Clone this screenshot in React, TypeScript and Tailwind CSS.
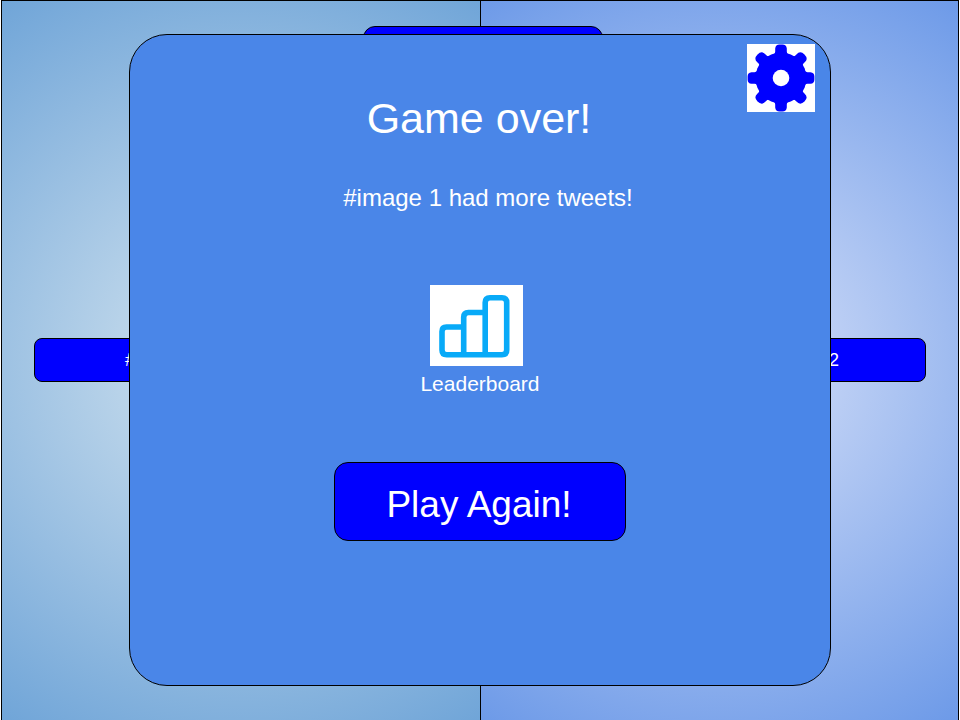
function GearIcon() {
  return (
    <svg viewBox="0 0 68 68" className="size-[68px] bg-white" aria-hidden="true">
      <g fill="#0000ff">
        <circle cx="34" cy="34" r="25.5" />
        {[0, 90, 180, 270].map((angle) => (
          <path
            key={angle}
            transform={`rotate(${angle} 34 34)`}
            d="M24 12 Q28 10.500 28.200 7.500 V4.500 Q28.600 .600 32.500 .600 H35.500 Q39.400 .600 39.800 4.500 V7.500 Q40 10.500 44 12 Z"
          />
        ))}
        {[45, 135, 225, 315].map((angle) => (
          <path
            key={angle}
            transform={`rotate(${angle} 34 34)`}
            d="M25 12 Q29 10 28.300 6.500 Q27.900 .800 34 .800 Q40.100 .800 39.700 6.500 Q39 10 43 12 Z"
          />
        ))}
      </g>
      <circle cx="34" cy="34" r="8.300" fill="#ffffff" />
    </svg>
  );
}

function BarsIcon() {
  return (
    <svg viewBox="0 0 93 81" className="h-[81px] w-[93px] bg-white" aria-hidden="true">
      <g fill="none" stroke="#08aaf8" strokeWidth="5.600" strokeLinejoin="round">
        <path d="M33.700 42 H16.500 Q12 42 12 46.500 V65 Q12 69.700 16.700 69.700 H72 Q76.700 69.700 76.700 65 V17.500 Q76.700 12.700 72 12.700 H60 Q55.200 12.700 55.200 17.500 V69.700" />
        <path d="M55.200 27.500 H38.500 Q33.700 27.500 33.700 32.200 V69.700" />
      </g>
    </svg>
  );
}

const choiceStyle =
  "h-11 rounded-lg border border-black bg-[#0000ff] text-lg leading-6 text-white";

export default function App() {
  return (
    <main className="grid min-h-screen bg-white px-px font-['Liberation_Sans',Arial,sans-serif]">
      <div className="relative col-start-1 row-start-1 grid grid-cols-2 border-t border-black">
        <section className="flex items-center border-l border-black bg-[radial-gradient(circle_at_center,#d5e5f0,#70a5d8)] pb-0.5 pl-8">
          <button type="button" className={`${choiceStyle} w-64`}>
            #image 1
          </button>
        </section>
        <section className="flex items-center justify-end border-x border-black bg-[radial-gradient(circle_at_center,#d9e2f9,#6d9ae8)] pr-8 pb-0.5">
          <button type="button" className={`${choiceStyle} w-62`}>
            #image 2
          </button>
        </section>
        <div className="absolute inset-x-0 top-[25px] flex justify-center pl-1.5">
          <div className="h-20 w-60 rounded-xl border border-black bg-[#0000ff]" />
        </div>
      </div>

      <div className="z-10 col-start-1 row-start-1 flex justify-center py-[34px]">
        <div
          role="dialog"
          aria-labelledby="result-title"
          className="relative flex w-full max-w-[702px] flex-col items-center rounded-[38px] border border-black bg-[#4a86e8] px-4 pt-[59px] pb-10 text-white"
        >
          <button type="button" aria-label="Settings" className="absolute top-[9px] right-[15px]">
            <GearIcon />
          </button>
          <h1 id="result-title" className="pr-0.5 text-[43px] leading-[48px]">
            Game over!
          </h1>
          <p className="mt-10 pl-4 text-2xl leading-8">#image 1 had more tweets!</p>
          <button type="button" className="mt-[71px] flex flex-col items-center gap-1">
            <span className="pr-1.5">
              <BarsIcon />
            </span>
            <span className="text-[21px] leading-7">Leaderboard</span>
          </button>
          <button
            type="button"
            className="mt-16 h-[79px] w-full max-w-[292px] rounded-[14px] border border-black bg-[#0000ff] pt-1.5 pr-0.5 text-[37px] leading-[44px]"
          >
            Play Again!
          </button>
        </div>
      </div>
    </main>
  );
}
